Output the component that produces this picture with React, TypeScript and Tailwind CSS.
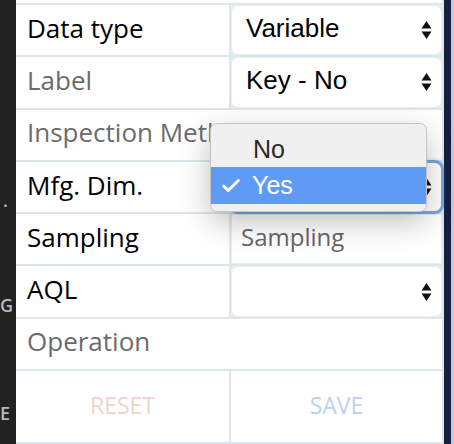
import { Check } from 'lucide-react'

const labelFont = { fontFamily: '"Open Sans", "Noto Sans", sans-serif' }

function Arrows() {
  return (
    <svg width="11" height="20" viewBox="0 0 11 20" className="shrink-0">
      <path d="M5.5 1 L10.5 8.5 L0.5 8.5 Z" fill="#111" />
      <path d="M5.5 19 L10.5 11.5 L0.5 11.5 Z" fill="#111" />
    </svg>
  )
}

function SelectBox({ value, focused }: { value?: string; focused?: boolean }) {
  return (
    <div
      className={
        'flex h-full items-center justify-between rounded-[6px] bg-white pl-[14px] pr-[9px] ' +
        (focused ? 'outline outline-[3px] outline-[#7aa7de] shadow-[0_0_4px_2px_rgba(90,140,210,0.5)]' : '')
      }
    >
      <span className="pb-[4px] text-[26px] text-black" style={{ fontFamily: '"Liberation Sans", Arial, sans-serif' }}>
        {value ?? ''}
      </span>
      <Arrows />
    </div>
  )
}

type Row = { label: string; muted?: boolean; select?: string | null; placeholder?: string; focused?: boolean; full?: boolean }

const rows: Row[] = [
  { label: 'Data type', select: 'Variable' },
  { label: 'Label', muted: true, select: 'Key - No' },
  { label: 'Inspection Method', muted: true, full: true },
  { label: 'Mfg. Dim.', select: '', focused: true },
  { label: 'Sampling', placeholder: 'Sampling' },
  { label: 'AQL', select: '' },
  { label: 'Operation', muted: true, full: true },
]

export default function App() {
  return (
    <div className="flex h-[444px] w-[454px] overflow-hidden bg-white">
      <div className="flex w-[16px] shrink-0 flex-col bg-[#222222] text-[18px] font-semibold text-[#b8b8b8]" style={labelFont}>
        <span className="mt-[190px] pl-[3px] leading-[20px]">.</span>
        <span className="mt-[85px] leading-[20px]">G</span>
        <span className="mt-[88px] leading-[20px]">E</span>
      </div>

      <div className="relative flex w-[426px] shrink-0 flex-col pt-[3px]">
        <div className="border-t-2 border-[#dde7e9]">
          {rows.map(r => (
            <div key={r.label} className="grid h-[52.3px] grid-cols-2 border-b-2 border-[#dde7e9]">
              <div
                className={
                  'flex items-center overflow-hidden whitespace-nowrap pb-[4px] pl-[11px] text-[26px] ' +
                  (r.muted ? 'text-[#6b6b6b]' : 'text-black') +
                  (r.full ? ' col-span-2' : '')
                }
                style={labelFont}
              >
                {r.label}
              </div>
              {!r.full && (
                <div className="border-l-2 border-[#dde7e9] bg-[#e6eef0] p-[1px]">
                  {r.placeholder ? (
                    <div className="flex h-full items-center bg-white pb-[4px] pl-[9px] text-[24px] text-[#666]" style={labelFont}>
                      {r.placeholder}
                    </div>
                  ) : (
                    <SelectBox value={r.select ?? ''} focused={r.focused} />
                  )}
                </div>
              )}
            </div>
          ))}
          <div className="grid h-[73px] grid-cols-2 border-b-2 border-[#dde7e9]" style={labelFont}>
            <div className="flex items-center justify-center pb-[2px] text-[23px] text-[#f0d3c9]">RESET</div>
            <div className="flex items-center justify-center border-l-2 border-[#dde7e9] pb-[2px] text-[23px] text-[#bcd0f0]">SAVE</div>
          </div>
        </div>

        <div
          className="absolute left-[194px] top-[123px] flex h-[89px] w-[217px] flex-col rounded-[7px] border border-[#c4c4c4] bg-[#f0f0f0] pt-[9px] shadow-[0_10px_30px_rgba(0,0,0,0.25)]"
          style={{ fontFamily: '"Liberation Sans", Arial, sans-serif' }}
        >
          <div className="flex h-[34px] items-center pl-[42px] text-[25px] text-[#2a2a2a]">No</div>
          <div className="flex h-[37px] items-center gap-[10px] bg-[#5f9bf5] pl-[9px] text-[25px] text-white">
            <Check size={22} strokeWidth={3.2} />
            <span>Yes</span>
          </div>
        </div>
      </div>

      <div className="w-[2px] shrink-0 bg-[#e4e4e4]" />
      <div className="w-[7px] shrink-0 bg-[#10223f]" />
      <div className="w-[3px] shrink-0 bg-[#c9c9c9]" />
    </div>
  )
}
